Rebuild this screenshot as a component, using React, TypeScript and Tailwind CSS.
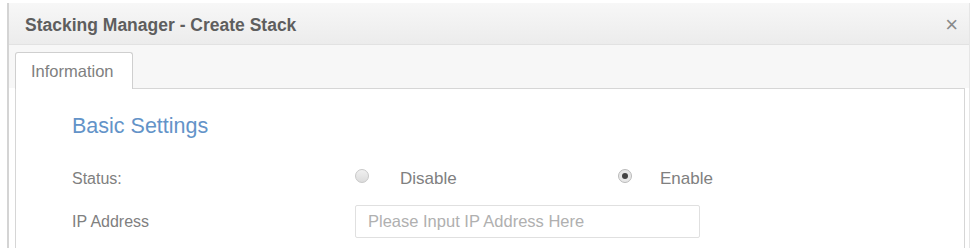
export default function App() {
  return (
    <div className="w-[973px] h-[248px] bg-white overflow-hidden pt-[3px] pl-[7px] pr-[3px]" style={{ fontFamily: '"Liberation Sans", Arial, sans-serif' }}>
      <div className="h-[245px] border-l-2 border-[#d4d4d4] border-r border-r-[#e6e6e6] flex flex-col">
        <div className="h-[42px] bg-gradient-to-b from-[#f7f7f7] to-[#ececec] border-b border-[#e2e2e2] flex items-center justify-between pl-[16px] pr-[11px] pt-[3px]">
          <span className="text-[17.5px] font-bold text-[#5e5e5e]">Stacking Manager - Create Stack</span>
          <span className="text-[#8a8a8a] text-[22px] leading-none">×</span>
        </div>
        <div className="h-[43px] bg-[#f7f7f7] flex items-end pl-[6px]">
          <div className="h-[37px] w-[118px] bg-white border border-[#cfcfcf] border-b-0 rounded-t-[3px] flex items-center pl-[15px] text-[16.5px] text-[#808080] -mb-px relative z-10">
            Information
          </div>
        </div>
        <div className="flex-1 ml-[6px] mr-[4px] border border-b-0 border-[#d6d6d6] bg-white pl-[56px] pt-[25px]">
          <div className="text-[21.5px] text-[#6393c8] leading-[24px]">Basic Settings</div>
          <div className="grid grid-cols-[283px_1fr] mt-[26px] text-[16px] text-[#808080]">
            <div className="h-[30px] flex items-center">Status:</div>
            <div className="h-[30px] flex items-center">
              <div className="flex items-center w-[263px]">
                <span className="w-[14px] h-[14px] rounded-full border border-[#c8c8c8] bg-gradient-to-b from-[#f0f0f0] to-[#dcdcdc] -mt-[6px]" />
                <span className="ml-[31px] text-[17px]">Disable</span>
              </div>
              <div className="flex items-center">
                <span className="w-[14px] h-[14px] rounded-full border border-[#bbb] bg-[#e8e8e8] flex items-center justify-center -mt-[6px]">
                  <span className="w-[6px] h-[6px] rounded-full bg-[#444]" />
                </span>
                <span className="ml-[28px] text-[17px]">Enable</span>
              </div>
            </div>
            <div className="h-[35px] mt-[10px] flex items-center">IP Address</div>
            <div className="h-[35px] mt-[10px] flex items-center">
              <div className="w-[345px] h-[33px] border border-[#e0e0e0] rounded-[2px] flex items-center pl-[12px] text-[16.5px] text-[#b0b0b0]">
                Please Input IP Address Here
              </div>
            </div>
          </div>
        </div>
      </div>
    </div>
  );
}
